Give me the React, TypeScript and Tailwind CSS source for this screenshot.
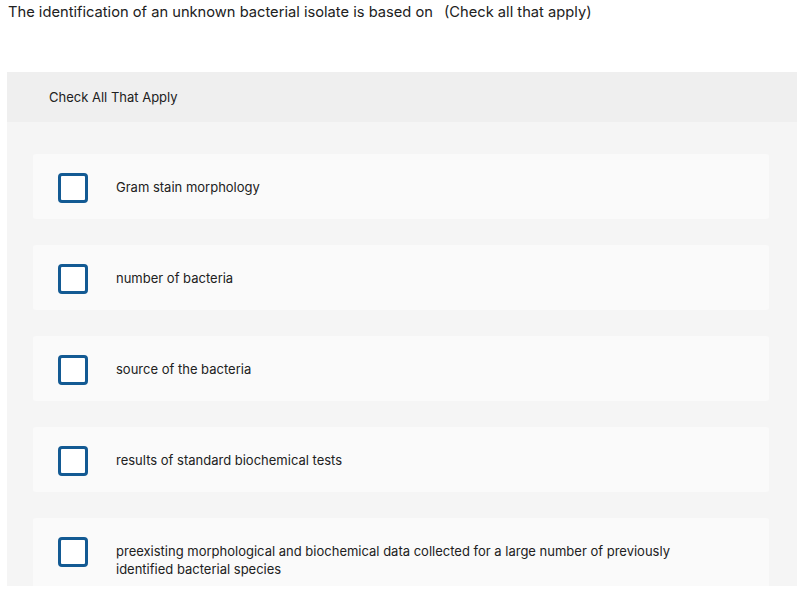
import React from "react";

const options = [
  "Gram stain morphology",
  "number of bacteria",
  "source of the bacteria",
  "results of standard biochemical tests",
  "preexisting morphological and biochemical data collected for a large number of previously identified bacterial species",
];

const App = () => {
  return (
    <div className="w-[809px] h-[598px] bg-white text-[#212121] font-['Inter',sans-serif] overflow-hidden">
      <p className="pl-[8px] pt-[3px] text-[14.7px] leading-[18px]">
        The identification of an unknown bacterial isolate is based on
        <span className="ml-[11px]">(Check all that apply)</span>
      </p>
      <div className="mt-[51px] ml-[7px] w-[790px] h-[514px] bg-[#f5f5f5] overflow-hidden">
        <div className="h-[50px] bg-[#efefef] flex items-center pl-[42px] pt-[2px] text-[13px]">
          Check All That Apply
        </div>
        <div className="pt-[32px] pl-[26px] pr-[28px] flex flex-col gap-[26px]">
          {options.map((item) => (
            <label
              key={item}
              className="flex items-start bg-[#fafafa] rounded-[3px] pt-[19px] pb-[16px] pl-[25px] pr-[90px]"
            >
              <span className="shrink-0 w-[30px] h-[30px] border-[3px] border-[#135a93] rounded-[4px] bg-white" />
              <span className="ml-[28px] mt-[5px] text-[13px] leading-[18px]">{item}</span>
            </label>
          ))}
        </div>
      </div>
    </div>
  );
};

export default App;
